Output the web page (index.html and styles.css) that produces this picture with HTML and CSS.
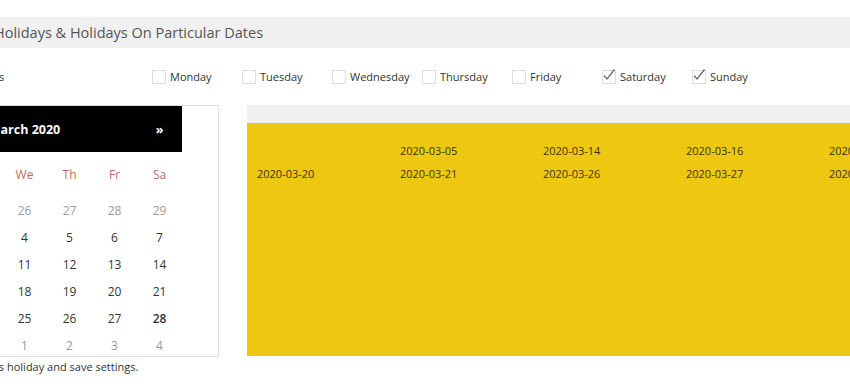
FILE: index.html
```html
<!DOCTYPE html>
<html>
<head>
  <title>Holiday Settings</title>
  <link rel="stylesheet" href="styles.css">
</head>
<body>
  <div class="page">
    <h2 class="section-title">Weekly Holidays &amp; Holidays On Particular Dates</h2>

    <div class="weekly-row">
      <div class="weekly-label">Weekly Holidays</div>
      <label class="day-check"><span class="box"></span>Monday</label>
      <label class="day-check"><span class="box"></span>Tuesday</label>
      <label class="day-check"><span class="box"></span>Wednesday</label>
      <label class="day-check"><span class="box"></span>Thursday</label>
      <label class="day-check"><span class="box"></span>Friday</label>
      <label class="day-check"><span class="box"><svg class="tick" width="14" height="14" viewBox="0 0 14 14"><path d="M2 5.5 L5 9 L12.5 -0.5" /></svg></span>Saturday</label>
      <label class="day-check"><span class="box"><svg class="tick" width="14" height="14" viewBox="0 0 14 14"><path d="M2 5.5 L5 9 L12.5 -0.5" /></svg></span>Sunday</label>
    </div>

    <div class="dates-row">
      <div class="calendar-col">
        <div class="calendar-box">
          <table class="calendar">
            <thead>
              <tr class="cal-head">
                <th class="nav">&laquo;</th>
                <th colspan="5" class="month">March 2020</th>
                <th class="nav">&raquo;</th>
              </tr>
              <tr class="dow">
                <th>Su</th><th>Mo</th><th>Tu</th><th>We</th><th>Th</th><th>Fr</th><th>Sa</th>
              </tr>
            </thead>
            <tbody>
              <tr><td class="old">23</td><td class="old">24</td><td class="old">25</td><td class="old">26</td><td class="old">27</td><td class="old">28</td><td class="old">29</td></tr>
              <tr><td>1</td><td>2</td><td>3</td><td>4</td><td>5</td><td>6</td><td>7</td></tr>
              <tr><td>8</td><td>9</td><td>10</td><td>11</td><td>12</td><td>13</td><td>14</td></tr>
              <tr><td>15</td><td>16</td><td>17</td><td>18</td><td>19</td><td>20</td><td>21</td></tr>
              <tr><td>22</td><td>23</td><td>24</td><td>25</td><td>26</td><td>27</td><td class="today">28</td></tr>
              <tr><td>29</td><td>30</td><td>31</td><td class="old">1</td><td class="old">2</td><td class="old">3</td><td class="old">4</td></tr>
            </tbody>
          </table>
        </div>
        <p class="hint">Click on a date to mark it as holiday and save settings.</p>
      </div>

      <div class="holiday-panel">
        <div class="panel-top"></div>
        <div class="holiday-list">
          <span></span>
          <span>2020-03-05</span>
          <span>2020-03-14</span>
          <span>2020-03-16</span>
          <span>2020-03-19</span>
          <span>2020-03-20</span>
          <span>2020-03-21</span>
          <span>2020-03-26</span>
          <span>2020-03-27</span>
          <span>2020-03-28</span>
        </div>
      </div>
    </div>
  </div>
</body>
</html>
```

FILE: styles.css
```css
body {
  margin: 0;
  font-family: "Open Sans", Arial, sans-serif;
  background-color: #ffffff;
  color: #333333;
  overflow: hidden;
}

.page {
  width: 1160px;
  margin-left: -160px;
  padding-top: 17px;
}

.section-title {
  margin: 0;
  height: 31px;
  line-height: 31px;
  padding-left: 102px;
  background-color: #f0f0f0;
  font-size: 14.5px;
  font-weight: normal;
  color: #555555;
}

.weekly-row {
  display: flex;
  align-items: center;
  height: 57px;
}

.weekly-label {
  width: 312px;
  padding-left: 81px;
  box-sizing: border-box;
  font-size: 11px;
  white-space: nowrap;
}

.day-check {
  display: flex;
  align-items: center;
  width: 90px;
  font-size: 11px;
  color: #333333;
}

.box {
  display: inline-block;
  width: 14px;
  height: 14px;
  border: 1px solid #dcdcdc;
  margin-right: 4px;
  box-sizing: border-box;
}

.tick {
  display: block;
  margin: -1px 0 0 -1px;
  overflow: visible;
}

.tick path {
  fill: none;
  stroke: #707070;
  stroke-width: 1.4;
}

.dates-row {
  display: flex;
  align-items: flex-start;
}

.calendar-col {
  margin-left: 20px;
  width: 359px;
}

.calendar-box {
  border: 1px solid #dddddd;
  padding: 0 0 0 6px;
  height: 250px;
  overflow: hidden;
}

.calendar {
  border-collapse: collapse;
  width: 315px;
  font-size: 12px;
}

.calendar th,
.calendar td {
  width: 45px;
  padding: 0;
  text-align: center;
}

.cal-head th {
  background-color: #000000;
  color: #ffffff;
  height: 46px;
  font-size: 12.5px;
  font-weight: bold;
}

.dow th {
  height: 45px;
  font-weight: normal;
  color: #b86d6d;
}

.calendar td {
  height: 27px;
}

.calendar td.old {
  color: #9a9a9a;
}

.calendar td.today {
  font-weight: 600;
}

.hint {
  margin: 2px 0 0;
  padding-left: 3px;
  font-size: 11px;
}

.holiday-panel {
  margin-left: 28px;
  flex: 1;
}

.panel-top {
  height: 18px;
  background-color: #f0f0f0;
}

.holiday-list {
  display: grid;
  grid-template-columns: repeat(5, 143px);
  grid-auto-rows: 23px;
  align-content: start;
  height: 233px;
  padding: 16px 0 0 10px;
  box-sizing: border-box;
  background-color: #eec710;
  font-size: 11px;
  line-height: 23px;
  color: #3b3418;
}
```
